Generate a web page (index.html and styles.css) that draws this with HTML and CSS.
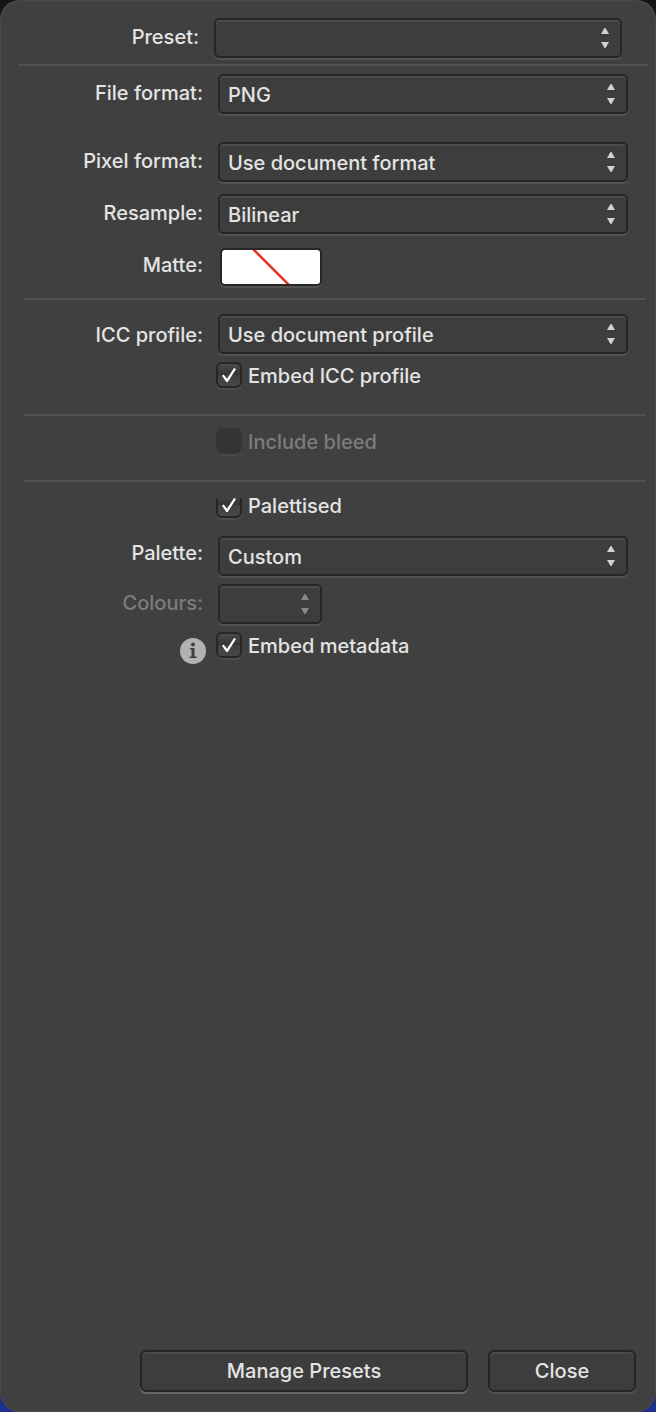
FILE: index.html
```html
<!DOCTYPE html>
<html lang="en-GB">
<head>
<meta charset="utf-8">
<title>Export settings</title>
<link rel="stylesheet" href="styles.css">
</head>
<body>
<svg class="defs" aria-hidden="true">
  <symbol id="arrows" viewBox="0 0 8 20"><path d="M3.500 0H4.500L8 6H0ZM0 14H8L4.500 20H3.500Z" fill="currentColor"/></symbol>
</svg>
<form class="panel">
  <div class="row preset">
    <label class="label" for="preset">Preset:</label>
    <span class="drop"><select id="preset"><option></option></select><svg class="arrows"><use href="#arrows"/></svg></span>
  </div>
  <section class="group first">
    <div class="row format">
      <label class="label" for="file">File format:</label>
      <span class="drop"><select id="file"><option>PNG</option></select><svg class="arrows"><use href="#arrows"/></svg></span>
    </div>
    <div class="row">
      <label class="label" for="pixel">Pixel format:</label>
      <span class="drop"><select id="pixel"><option>Use document format</option></select><svg class="arrows"><use href="#arrows"/></svg></span>
    </div>
    <div class="row">
      <label class="label" for="resample">Resample:</label>
      <span class="drop"><select id="resample"><option>Bilinear</option></select><svg class="arrows"><use href="#arrows"/></svg></span>
    </div>
    <div class="row">
      <label class="label" for="matte">Matte:</label>
      <button class="swatch" id="matte" type="button" aria-label="Matte: none"><svg viewBox="0 0 98 34"><path d="M31 -1L67 35" stroke="#e8301f" stroke-width="2.500"/></svg></button>
    </div>
  </section>
  <section class="group icc">
    <div class="row">
      <label class="label level" for="icc">ICC profile:</label>
      <span class="drop"><select id="icc"><option>Use document profile</option></select><svg class="arrows"><use href="#arrows"/></svg></span>
    </div>
    <div class="row">
      <label class="check"><input type="checkbox" checked>Embed ICC profile</label>
    </div>
  </section>
  <section class="group bleed">
    <div class="row">
      <label class="check off"><input type="checkbox" disabled>Include bleed</label>
    </div>
  </section>
  <section class="group palette">
    <div class="row palettised">
      <label class="check"><input class="clipped" type="checkbox" checked>Palettised</label>
    </div>
    <div class="row">
      <label class="label raised" for="palette">Palette:</label>
      <span class="drop"><select id="palette"><option>Custom</option></select><svg class="arrows"><use href="#arrows"/></svg></span>
    </div>
    <div class="row">
      <label class="label off" for="colours">Colours:</label>
      <span class="drop small off"><select id="colours" disabled><option></option></select><svg class="arrows"><use href="#arrows"/></svg></span>
    </div>
    <div class="row">
      <button class="info" type="button" aria-label="About metadata"><svg viewBox="0 0 26 26"><circle cx="13" cy="13" r="13" fill="#b2b2b2"/><circle cx="13" cy="6.500" r="2" fill="#404040"/><path d="M10 10H14.500V18.500H16.500V20H9.500V18.500H11.500V11.500H10Z" fill="#404040"/></svg></button>
      <label class="check"><input type="checkbox" checked>Embed metadata</label>
    </div>
  </section>
  <footer class="actions">
    <button class="push manage" type="button">Manage Presets</button>
    <button class="push close" type="button">Close</button>
  </footer>
</form>
</body>
</html>
```
FILE: styles.css
```css
* { box-sizing: border-box; }
body {
  margin: 0;
  background: linear-gradient(#141414 50%, #1d2f8f 50%);
  color: #e4e4e4;
  font: 500 20px/24px Inter, "Liberation Sans", sans-serif;
}
.defs { position: absolute; width: 0; height: 0; }
.panel {
  display: flex;
  flex-direction: column;
  min-height: 100vh;
  padding: 18px 0 20px;
  background: #404040;
  border-radius: 20px;
  box-shadow: inset 0 0 0 1px #4a4a4a;
}
.row {
  display: grid;
  grid-template-columns: 204px 1fr;
  column-gap: 12px;
  align-items: center;
}
.label { padding: 0 1px 2px 0; text-align: right; }
.label.level { padding: 2px 1px 0 0; }
.label.raised { padding-bottom: 6px; }
.off { color: #7c7c7c; }
.drop { position: relative; display: block; margin: 0 28px 0 2px; }
.preset { grid-template-columns: 200px 1fr; }
.preset .drop { margin-right: 34px; }
.drop.small { width: 104px; }
select {
  display: block;
  width: 100%;
  height: 40px;
  padding: 2px 36px 0 8px;
  appearance: none;
  border: 2px solid #262626;
  border-radius: 5px;
  background: #3d3d3d;
  box-shadow: inset 0 2px #4b4b4b, 0 2px #525252;
  color: inherit;
  font: inherit;
  opacity: 1;
}
.arrows {
  position: absolute;
  top: 10px;
  right: 13px;
  width: 8px;
  height: 20px;
  color: #d0d0d0;
  pointer-events: none;
}
.off .arrows { color: #888888; }
.group { display: grid; }
.group::before {
  content: "";
  height: 2px;
  margin: 0 10px 0 24px;
  background: #525252;
}
.first { row-gap: 12px; margin-top: 6px; }
.first::before { margin: 0 8px -4px 18px; }
.first .format { margin: -2px 0 16px; }
.swatch {
  width: 102px;
  height: 38px;
  margin: 2px 0 0 4px;
  padding: 0;
  border: 2px solid #262626;
  border-radius: 5px;
  background: #ffffff;
  box-shadow: 0 2px #525252;
}
.swatch svg { display: block; width: 100%; height: 100%; }
.icc { margin-top: 12px; row-gap: 8px; }
.icc::before { margin-bottom: 6px; }
.bleed { margin-top: 26px; row-gap: 12px; }
.check {
  grid-column: 2;
  display: flex;
  align-items: flex-end;
  gap: 6px;
  height: 26px;
}
.check input {
  appearance: none;
  display: grid;
  place-items: center;
  width: 26px;
  height: 26px;
  margin: 0;
  border: 2px solid #262626;
  border-radius: 6px;
  background: linear-gradient(#4b4b4b, #333333 50%, #414141 51%, #474747);
  box-shadow: 0 2px #4c4c4c;
}
.check input:checked::before {
  content: "";
  width: 14px;
  height: 14px;
  background: #ffffff;
  clip-path: polygon(0 56%, 11% 47%, 36% 77%, 86% 0, 100% 7%, 41% 100%, 31% 100%);
}
.check input:disabled { border-color: #363636; background: #343434; box-shadow: 0 2px #484848; }
.check .clipped { clip-path: inset(6px 0 -2px 0); }
.palette { margin-top: 26px; row-gap: 8px; }
.palettised { margin: 2px 0 10px; }
.info {
  justify-self: end;
  width: 26px;
  height: 26px;
  margin: 6px -2px -6px 0;
  padding: 0;
  border: 0;
  background: none;
}
.info svg { display: block; }
.actions { display: flex; gap: 20px; margin: auto 20px 0 140px; }
.push {
  height: 42px;
  padding: 0;
  border: 2px solid #262626;
  border-radius: 6px;
  background: #3d3d3d;
  box-shadow: inset 0 2px #4b4b4b, 0 2px #525252;
  color: inherit;
  font: inherit;
}
.manage { flex: 1; box-shadow: inset 0 2px #4b4b4b, 0 2px #686868; }
.close { width: 148px; }
```
